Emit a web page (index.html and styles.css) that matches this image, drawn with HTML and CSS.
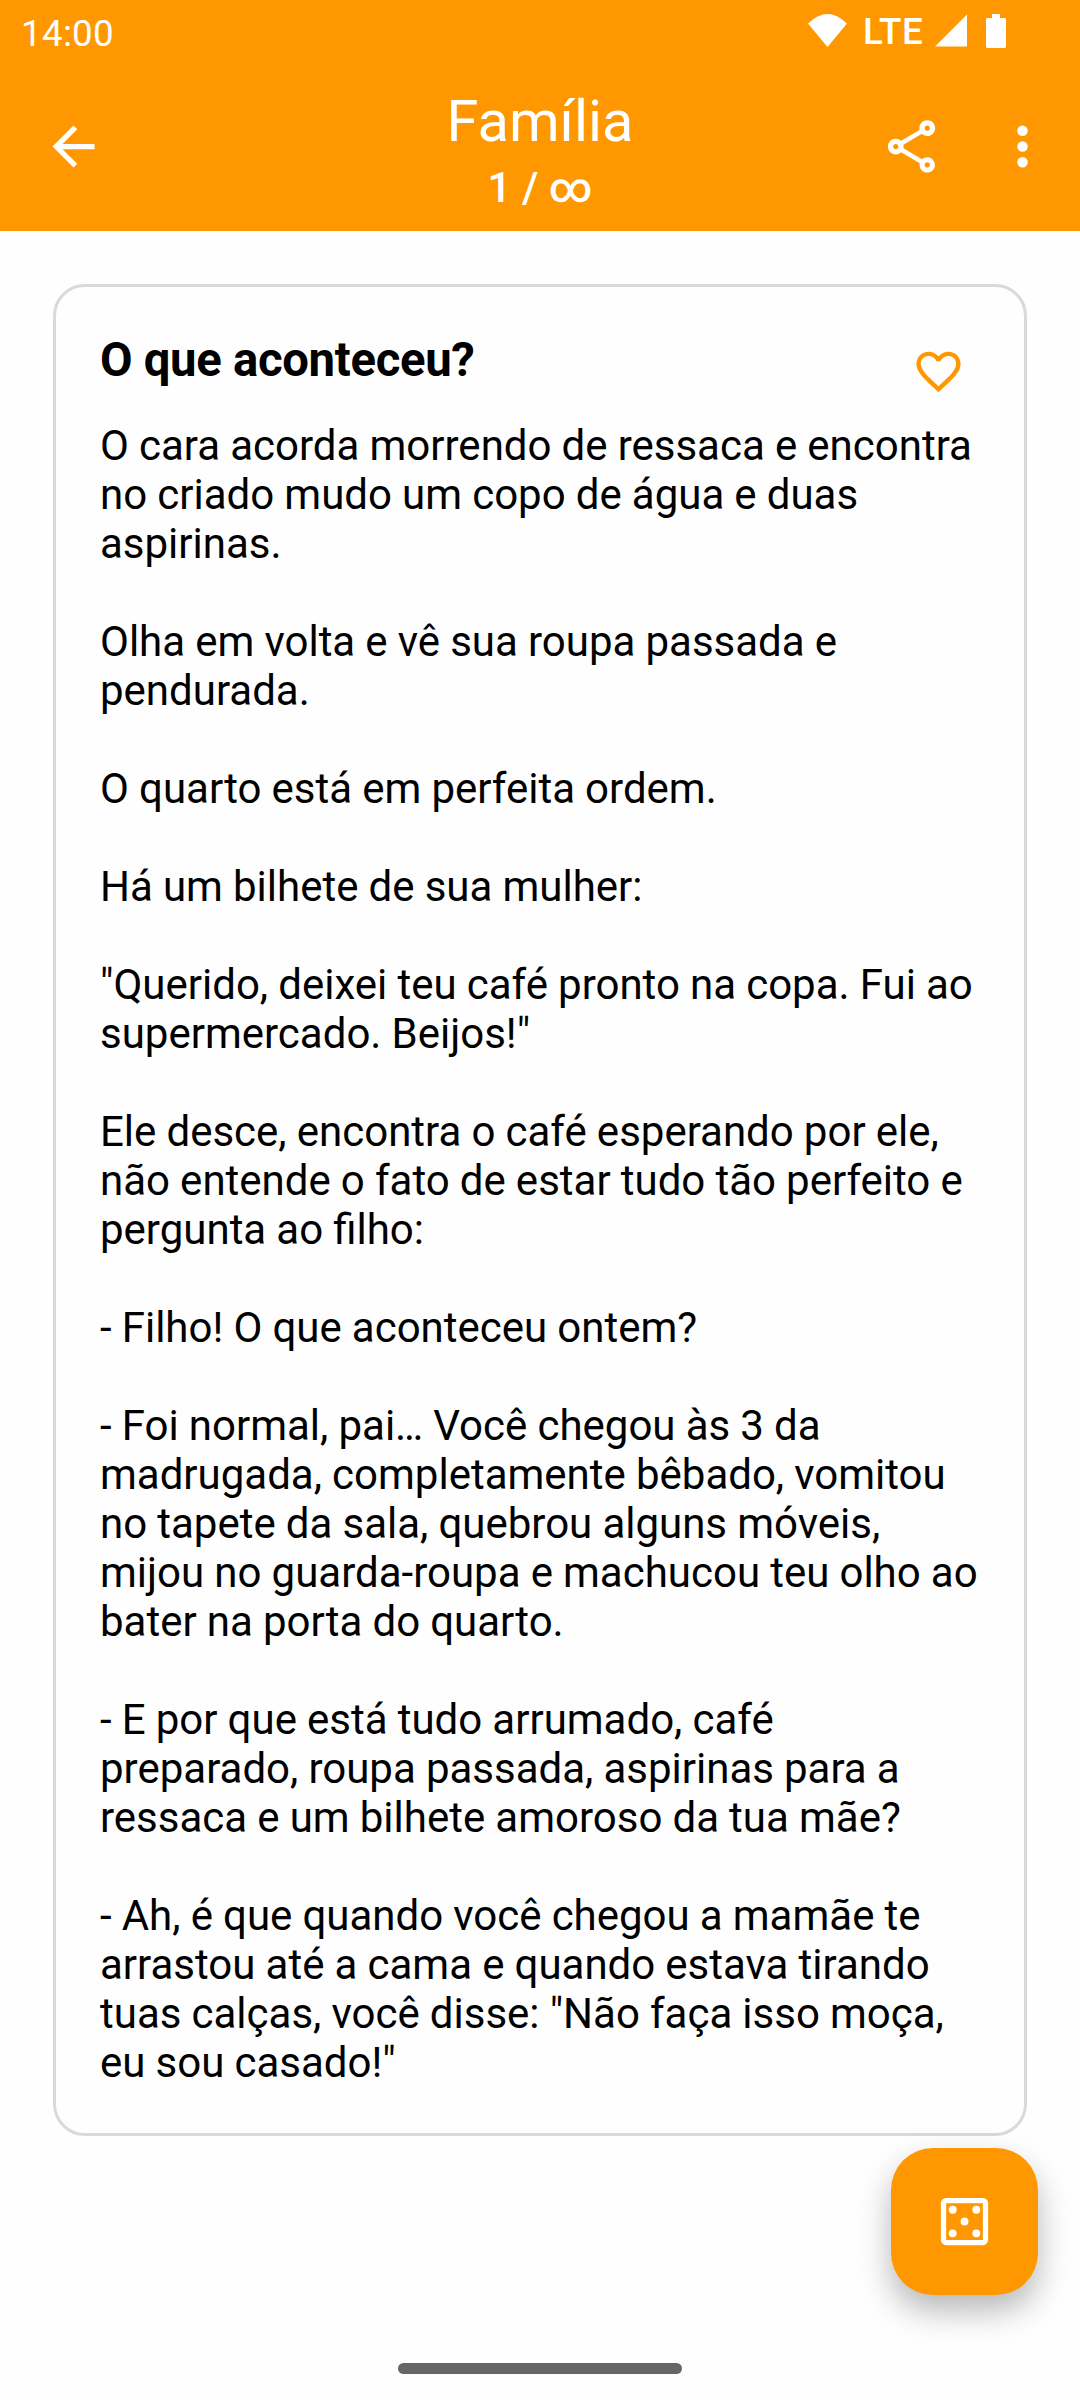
FILE: index.html
```html
<!DOCTYPE html>
<html lang="pt-BR">
<head>
  <meta charset="UTF-8" />
  <meta name="viewport" content="width=device-width, initial-scale=1.0" />
  <title>Família</title>
  <link rel="stylesheet" href="styles.css">
</head>
<body>
  <header>
    <div class="status-bar">
      <span class="clock">14:00</span>
      <div class="status-icons">
        <svg class="wifi" viewBox="0 0 39 33"><path d="M0 9.500Q19.500-9.500 39 9.500L19.500 33z"/></svg>
        <span class="network">LTE</span>
        <svg class="signal" viewBox="0 0 32 32"><path d="M32 0v32H0z"/></svg>
        <svg class="battery" viewBox="0 0 20 34"><path d="M6 0h8v4h4.500q1.500 0 1.500 1.500v27q0 1.500-1.500 1.500h-17q-1.500 0-1.500-1.500v-27q0-1.500 1.500-1.500H6z"/></svg>
      </div>
    </div>

    <div class="app-bar">
      <div class="bar-side">
        <svg class="icon" viewBox="0 0 24 24"><path d="M20 11H7.830l5.590-5.590L12 4l-8 8 8 8 1.410-1.410L7.830 13H20v-2z"/></svg>
      </div>
      <div class="bar-title">
        <h1>Família</h1>
        <p class="counter">1 / ∞</p>
      </div>
      <div class="bar-side bar-actions">
        <svg class="icon" viewBox="0 0 24 24"><path d="M18 16.080c-.760 0-1.440.300-1.960.770L8.910 12.700c.050-.230.090-.460.090-.700s-.040-.470-.090-.700l7.050-4.110c.540.500 1.250.810 2.040.810 1.660 0 3-1.340 3-3s-1.340-3-3-3-3 1.340-3 3c0 .240.040.470.090.700L8.040 9.810C7.500 9.310 6.790 9 6 9c-1.660 0-3 1.340-3 3s1.340 3 3 3c.790 0 1.500-.310 2.040-.810l7.120 4.160c-.050.210-.080.430-.080.650 0 1.610 1.310 2.920 2.920 2.920s2.920-1.310 2.920-2.920-1.310-2.920-2.920-2.920zM18 4c.550 0 1 .450 1 1s-.450 1-1 1-1-.450-1-1 .450-1 1-1zM6 13c-.550 0-1-.450-1-1s.450-1 1-1 1 .450 1 1-.450 1-1 1zm12 7.020c-.550 0-1-.450-1-1s.450-1 1-1 1 .450 1 1-.450 1-1 1z"/></svg>
        <svg class="icon" viewBox="0 0 24 24"><circle cx="12" cy="6" r="2"/><circle cx="12" cy="12" r="2"/><circle cx="12" cy="18" r="2"/></svg>
      </div>
    </div>
  </header>

  <main class="card">
    <div class="card-head">
      <h2>O que aconteceu?</h2>
      <svg class="heart" viewBox="0 0 24 24"><path d="M16.500 3c-1.740 0-3.410.810-4.500 2.090C10.910 3.810 9.240 3 7.500 3 4.420 3 2 5.420 2 8.500c0 3.780 3.400 6.860 8.550 11.540L12 21.350l1.450-1.320C18.600 15.360 22 12.280 22 8.500 22 5.420 19.580 3 16.500 3zm-4.400 15.550l-.100.100-.100-.100C7.140 14.240 4 11.390 4 8.500 4 6.500 5.500 5 7.500 5c1.540 0 3.040.990 3.570 2.360h1.870C13.460 5.990 14.960 5 16.500 5c2 0 3.500 1.500 3.500 3.500 0 2.890-3.140 5.740-7.900 10.050z"/></svg>
    </div>
    <div class="joke">
      <p>O cara acorda morrendo de ressaca e encontra no criado mudo um copo de água e duas aspirinas.</p>
      <p>Olha em volta e vê sua roupa passada e pendurada.</p>
      <p>O quarto está em perfeita ordem.</p>
      <p>Há um bilhete de sua mulher:</p>
      <p>"Querido, deixei teu café pronto na copa. Fui ao supermercado. Beijos!"</p>
      <p>Ele desce, encontra o café esperando por ele, não entende o fato de estar tudo tão perfeito e pergunta ao filho:</p>
      <p>- Filho! O que aconteceu ontem?</p>
      <p>- Foi normal, pai… Você chegou às 3 da madrugada, completamente bêbado, vomitou no tapete da sala, quebrou alguns móveis, mijou no guarda-roupa e machucou teu olho ao bater na porta do quarto.</p>
      <p>- E por que está tudo arrumado, café preparado, roupa passada, aspirinas para a ressaca e um bilhete amoroso da tua mãe?</p>
      <p>- Ah, é que quando você chegou a mamãe te arrastou até a cama e quando estava tirando tuas calças, você disse: "Não faça isso moça, eu sou casado!"</p>
    </div>
  </main>

  <button class="fab" aria-label="Aleatória">
    <svg class="icon" viewBox="0 0 24 24"><path fill-rule="evenodd" d="M5 3h14a2 2 0 0 1 2 2v14a2 2 0 0 1-2 2H5a2 2 0 0 1-2-2V5a2 2 0 0 1 2-2zm0 2v14h14V5z"/><circle cx="7.500" cy="7.500" r="1.500"/><circle cx="16.500" cy="7.500" r="1.500"/><circle cx="12" cy="12" r="1.500"/><circle cx="7.500" cy="16.500" r="1.500"/><circle cx="16.500" cy="16.500" r="1.500"/></svg>
  </button>

  <div class="home-bar"></div>
</body>
</html>
```
FILE: styles.css
```css
* {
  box-sizing: border-box;
}
body {
  margin: 0;
  height: 2400px;
  display: flex;
  flex-direction: column;
  position: relative;
  overflow: hidden;
  font-family: Roboto, sans-serif;
  background-color: #fefefe;
  color: #000;
}
h1, h2, p {
  margin: 0;
}
svg {
  display: block;
  flex: none;
}
header {
  height: 231px;
  background-color: #ff9800;
  color: white;
  fill: white;
}
.status-bar {
  height: 63px;
  padding: 0 74px 0 21px;
  display: flex;
  justify-content: space-between;
  align-items: flex-start;
}
.clock {
  padding-top: 12px;
  font-size: 36.750px;
  line-height: 44px;
  letter-spacing: 0.3px;
}
.status-icons {
  display: flex;
  align-items: flex-start;
  padding-top: 14px;
}
.wifi {
  width: 39px;
  height: 33px;
}
.network {
  width: 60px;
  margin: -4px 12px 0 16px;
  font-size: 36.750px;
  font-weight: 500;
  line-height: 44px;
  letter-spacing: 0.6px;
}
.signal {
  width: 32px;
  height: 33px;
  margin-right: 19px;
}
.battery {
  width: 20px;
  height: 34px;
}
.app-bar {
  height: 168px;
  padding: 0 26px 0 42px;
  display: flex;
  justify-content: space-between;
}
.bar-side {
  width: 174px;
  padding-top: 52px;
}
.bar-actions {
  display: flex;
  justify-content: space-between;
}
.bar-title {
  padding: 24px 16px 0 0;
  text-align: center;
}
.bar-title h1 {
  font-size: 57.750px;
  font-weight: 400;
  line-height: 68px;
}
.counter {
  font-size: 42px;
  font-weight: 500;
  line-height: 50px;
  margin-top: 8px;
}
.icon {
  width: 63px;
  height: 63px;
}
.card {
  margin: 53px 53px 0;
  height: 1852px;
  padding: 45px 44px 0 44px;
  border: 3px solid #d9d9d9;
  border-radius: 32px;
}
.card-head {
  display: flex;
  justify-content: space-between;
  height: 89px;
  padding-right: 15px;
}
.card-head h2 {
  font-size: 47.250px;
  font-weight: 700;
  line-height: 56px;
  letter-spacing: -0.3px;
}
.heart {
  width: 53px;
  height: 53px;
  margin-top: 13px;
  fill: #ff9800;
}
.joke {
  font-size: 42px;
  line-height: 49px;
  word-spacing: -0.300px;
}
.joke p + p {
  margin-top: 49px;
}
.fab {
  position: absolute;
  right: 42px;
  bottom: 105px;
  width: 147px;
  height: 147px;
  padding: 0;
  display: flex;
  justify-content: center;
  align-items: center;
  border: none;
  border-radius: 42px;
  background-color: #ff9800;
  fill: white;
  box-shadow: 0 16px 32px rgba(0,0,0,0.28);
}
.home-bar {
  width: 284px;
  height: 11px;
  margin: auto auto 26px;
  border-radius: 6px;
  background-color: #666;
}
```
